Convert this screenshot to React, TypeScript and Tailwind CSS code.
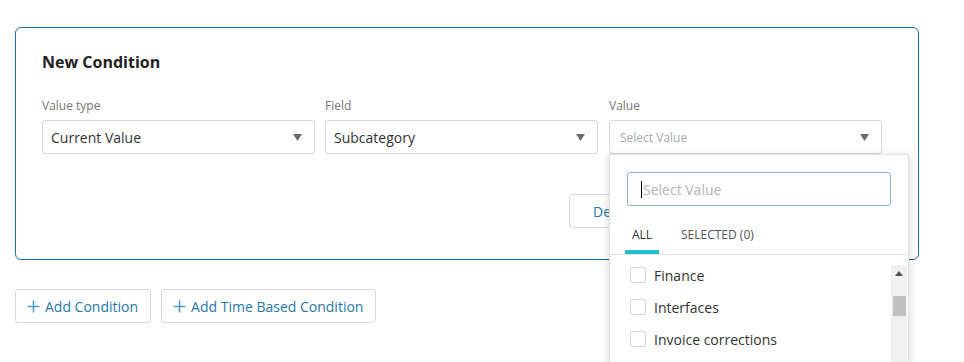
const Caret = () => (
	<svg width="9" height="7" viewBox="0 0 9 7" className="shrink-0">
		<path d="M0 0 L9 0 L4.5 7 Z" fill="#6b6b6b" />
	</svg>
);

const Select = ({ label, value, placeholder, children }: { label: string; value?: string; placeholder?: string; children?: React.ReactNode }) => (
	<div className="relative w-[273px] shrink-0">
		<div className="text-[12px] leading-[16px] text-[#777]">{label}</div>
		<div className="mt-[6px] flex h-[34px] items-center justify-between rounded-[3px] border border-[#d9d9d9] bg-white pl-[8px] pr-[12px]">
			{value ? (
				<span className="text-[14px] text-[#333]">{value}</span>
			) : (
				<span className="ml-[2px] mt-[2px] text-[12px] text-[#aaa]">{placeholder}</span>
			)}
			<Caret />
		</div>
		{children}
	</div>
);

const Plus = () => (
	<svg width="13" height="13" viewBox="0 0 13 13" className="shrink-0">
		<path d="M6.5 0.5 V12.5 M0.5 6.5 H12.5" stroke="#4f9ccb" strokeWidth="1.6" />
	</svg>
);

const items = ['Finance', 'Interfaces', 'Invoice corrections'];

const Dropdown = () => (
	<div className="absolute left-0 top-[56px] z-10 h-[240px] w-[300px] overflow-hidden border border-[#e2e2e2] bg-white shadow-[0_2px_8px_rgba(0,0,0,0.18)]">
		<div className="px-[17px] pt-[17px]">
			<div className="flex h-[34px] w-[264px] items-center rounded-[3px] border border-[#86b9cd] pl-[13px]">
				<span className="mr-[1px] h-[17px] w-px bg-black" />
				<span className="text-[14px] text-[#b5b5b5]">Select Value</span>
			</div>
		</div>
		<div className="mt-[21px] flex border-b border-[#e0e0e0] pl-[15px]">
			<div className="flex w-[34px] flex-col items-center">
				<span className="text-[12px] leading-[16px] text-[#333]">ALL</span>
				<span className="mt-[7px] h-[4px] w-full bg-[#1ec0d4]" />
			</div>
			<span className="ml-[22px] text-[12px] leading-[16px] text-[#555]">SELECTED (0)</span>
		</div>
		<div className="flex h-[150px]">
			<div className="flex-1 pl-[20px] pt-[4px]">
				{items.map((it) => (
					<div key={it} className="flex h-[32px] items-center">
						<span className="h-[16px] w-[16px] rounded-[2px] border border-[#d4d4d4]" />
						<span className="ml-[8px] text-[14px] text-[#333]">{it}</span>
					</div>
				))}
			</div>
			<div className="mr-[1px] mt-[10px] flex w-[16px] flex-col items-center bg-[#f0f0f0]">
				<svg width="8" height="5" viewBox="0 0 8 5" className="mt-[6px]">
					<path d="M0 5 L8 5 L4 0 Z" fill="#505050" />
				</svg>
				<span className="mt-[20px] h-[20px] w-[13px] bg-[#c1c1c1]" />
			</div>
		</div>
	</div>
);

export default function App() {
	return (
		<div className="h-[362px] overflow-hidden bg-white px-[15px] pt-[27px]" style={{ fontFamily: '"Open Sans", "Noto Sans", sans-serif' }}>
			<div className="h-[233px] w-[904px] rounded-[6px] border border-[#1b6f9c] px-[26px] pt-[22px]">
				<h2 className="text-[16px] font-bold leading-[24px] text-[#222]">New Condition</h2>
				<div className="mt-[24px] flex">
					<Select label="Value type" value="Current Value" />
					<div className="ml-[10px]">
						<Select label="Field" value="Subcategory" />
					</div>
					<div className="ml-[11px]">
						<Select label="Value" placeholder="Select Value">
							<Dropdown />
						</Select>
					</div>
				</div>
				<div className="ml-[527px] mt-[40px] flex gap-[10px]">
					<button className="h-[34px] rounded-[3px] border border-[#d9d9d9] px-[23px] text-[14px] text-[#1f78a8]">Delete</button>
					<button className="h-[34px] rounded-[3px] bg-[#1f78a8] px-[23px] text-[14px] text-white">Save</button>
				</div>
			</div>
			<div className="mt-[29px] flex gap-[10px]">
				<button className="flex h-[34px] items-center gap-[5px] rounded-[3px] border border-[#d9d9d9] pl-[11px] pr-[12px] text-[14px] text-[#1f78a8]">
					<Plus />
					Add Condition
				</button>
				<button className="flex h-[34px] items-center gap-[5px] rounded-[3px] border border-[#d9d9d9] pl-[11px] pr-[12px] text-[14px] text-[#1f78a8]">
					<Plus />
					Add Time Based Condition
				</button>
			</div>
		</div>
	);
}
